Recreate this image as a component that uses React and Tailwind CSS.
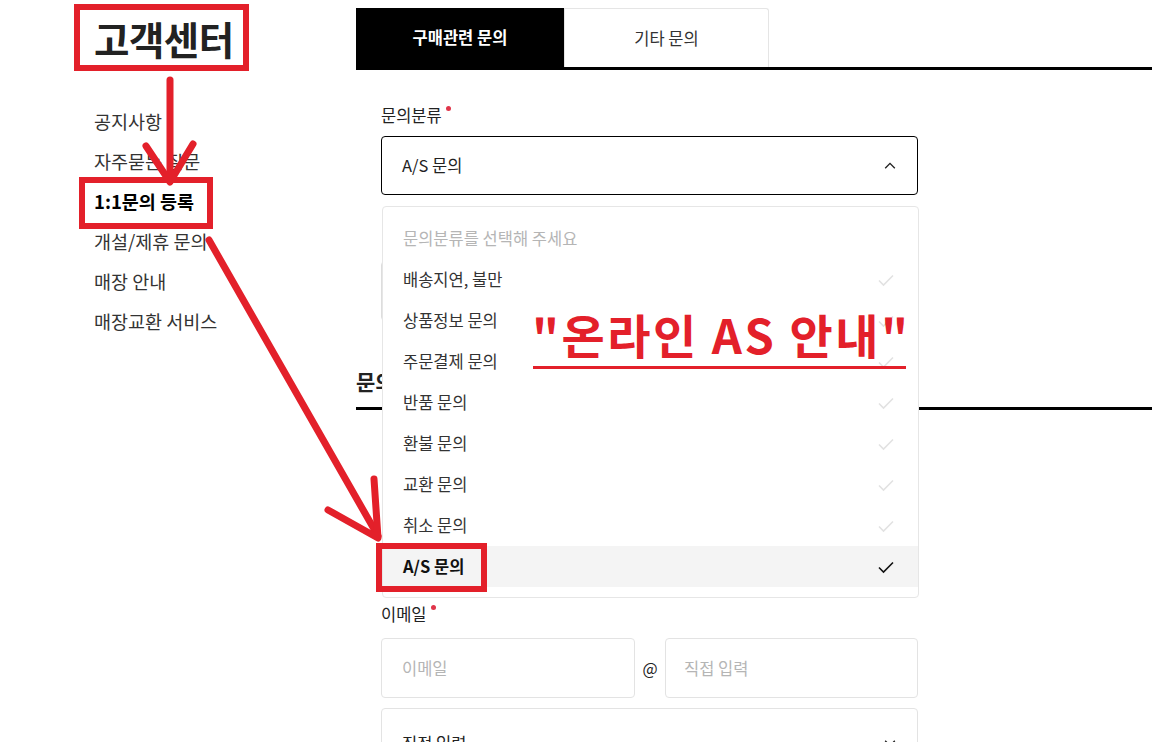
import React from 'react';

const font = { fontFamily: '"Noto Sans CJK KR", "Noto Sans", sans-serif' };

const options = [
  '배송지연, 불만',
  '상품정보 문의',
  '주문결제 문의',
  '반품 문의',
  '환불 문의',
  '교환 문의',
  '취소 문의',
  'A/S 문의',
];

const navItems = ['공지사항', '자주묻는 질문', '1:1문의 등록', '개설/제휴 문의', '매장 안내', '매장교환 서비스'];

function Check({ className }) {
  return (
    <svg viewBox="0 0 20 20" className={className} fill="none" stroke="currentColor" strokeWidth="1.6">
      <path d="M3 10.5l4.5 4.5L17 5.5" />
    </svg>
  );
}

function Chevron({ up }) {
  return (
    <svg viewBox="0 0 16 16" className="w-[14px] h-[14px] text-[#222]" fill="none" stroke="currentColor" strokeWidth="1.6">
      <path d={up ? 'M2.5 10.5L8 5l5.5 5.5' : 'M2.5 5.5L8 11l5.5-5.5'} />
    </svg>
  );
}

function Required({ children }) {
  return (
    <div className="flex items-start text-[16.5px] text-[#222] leading-[20px]">
      {children}
      <span className="ml-[4px] mt-[1px] w-[5px] h-[5px] rounded-full bg-[#e0354a]" />
    </div>
  );
}

export default function App() {
  return (
    <div className="relative w-[1152px] h-[742px] overflow-hidden bg-white text-[#222]" style={font}>
      <div className="flex">
        {/* Sidebar */}
        <aside className="w-[356px] shrink-0 pl-[94px]">
          <h1 className="text-[38.5px] font-bold leading-[40px] mt-[18px] tracking-[-0.5px]">고객센터</h1>
          <ul className="mt-[43px]">
            {navItems.map((item, i) => (
              <li
                key={item}
                className={`h-[40px] leading-[40px] text-[18.5px] ${i === 2 ? 'font-bold text-black' : 'text-[#333]'}`}
              >
                {item}
              </li>
            ))}
          </ul>
        </aside>

        {/* Main */}
        <main className="flex-1">
          <div className="flex mt-[8px] border-b-[3px] border-black">
            <div className="w-[208px] h-[59px] bg-black text-white font-bold text-[16.5px] flex items-center justify-center">
              구매관련 문의
            </div>
            <div className="w-[205px] h-[59px] bg-white border border-b-0 border-[#e5e5e5] rounded-tr-[3px] text-[16.5px] text-[#333] flex items-center justify-center">
              기타 문의
            </div>
          </div>

          <div className="pl-[25px] w-[562px]">
            <div className="mt-[35px]">
              <Required>문의분류</Required>
            </div>
            <div className="relative mt-[11px]">
              <div className="h-[59px] border border-black rounded-[4px] flex items-center justify-between px-[20px] text-[16.5px]">
                <span>A/S 문의</span>
                <Chevron up />
              </div>

              {/* hidden field behind dropdown */}
              <div className="mt-[66px] h-[60px] border border-[#ddd] rounded-[4px]" />

              {/* Dropdown list */}
              <div className="absolute left-[1px] top-[70px] w-[537px] bg-white border border-[#e6e6e6] rounded-[4px] z-10 pt-[11px] pb-[10px]">
                <div className="h-[41px] flex items-center px-[20px] text-[16.5px] text-[#b5b5b5]">
                  문의분류를 선택해 주세요
                </div>
                {options.map((opt, i) => {
                  const selected = i === options.length - 1;
                  return (
                    <div
                      key={opt}
                      className={`h-[41px] flex items-center justify-between pl-[20px] pr-[22px] text-[16.5px] ${
                        selected ? 'bg-[#f4f4f4] font-bold text-[#111]' : 'text-[#333]'
                      }`}
                    >
                      <span>{opt}</span>
                      <Check className={`w-[20px] h-[20px] ${selected ? 'text-[#111]' : 'text-[#e2e2e2]'}`} />
                    </div>
                  );
                })}
              </div>
            </div>
          </div>

          <div className="mt-[46px]">
            <h2 className="text-[21px] font-bold leading-[28px]">문의내용</h2>
            <div className="mt-[12px] border-b-[3px] border-black" />
          </div>

          <div className="pl-[25px] w-[562px] mt-[194px]">
            <Required>이메일</Required>
            <div className="flex items-center mt-[14px]">
              <div className="w-[254px] h-[60px] border border-[#e3e3e3] rounded-[4px] flex items-center px-[20px] text-[16.5px] text-[#b5b5b5]">
                이메일
              </div>
              <span className="w-[30px] text-center text-[16px] text-[#222]">@</span>
              <div className="flex-1 h-[60px] border border-[#e3e3e3] rounded-[4px] flex items-center px-[18px] text-[16.5px] text-[#b5b5b5]">
                직접 입력
              </div>
            </div>
            <div className="mt-[10px] h-[56px] border border-[#e3e3e3] rounded-[4px] flex items-center justify-between px-[20px] text-[16.5px]">
              <span className="mt-[14px]">직접 입력</span>
              <span className="mt-[14px]"><Chevron /></span>
            </div>
          </div>
        </main>
      </div>

      {/* Annotations */}
      <div className="absolute left-[74px] top-[4px] w-[175px] h-[67px] border-[6px] border-[#e3202a] z-20" />
      <div className="absolute left-[79px] top-[177px] w-[134px] h-[52px] border-[6px] border-[#e3202a] z-20" />
      <div className="absolute left-[376px] top-[543px] w-[111px] h-[49px] border-[6px] border-[#e3202a] z-20" />

      <div className="absolute left-[532px] top-[304px] z-20 text-[#e3202a] font-bold text-[47px] leading-[60px] tracking-[2.5px] whitespace-nowrap">
        "온라인 AS 안내"
      </div>
      <div className="absolute left-[533px] top-[366px] w-[373px] h-[3px] bg-[#e3202a] z-20" />

      <svg className="absolute inset-0 z-20 pointer-events-none" width="1152" height="742" fill="none" stroke="#e3202a" strokeWidth="7" strokeLinecap="round" strokeLinejoin="round">
        <path d="M170 80 L170 180" />
        <path d="M146 146 L170 182 L193 144" />
        <path d="M209 240 L378 536" />
        <path d="M328 510 L378 538 L374 479" />
      </svg>
    </div>
  );
}
